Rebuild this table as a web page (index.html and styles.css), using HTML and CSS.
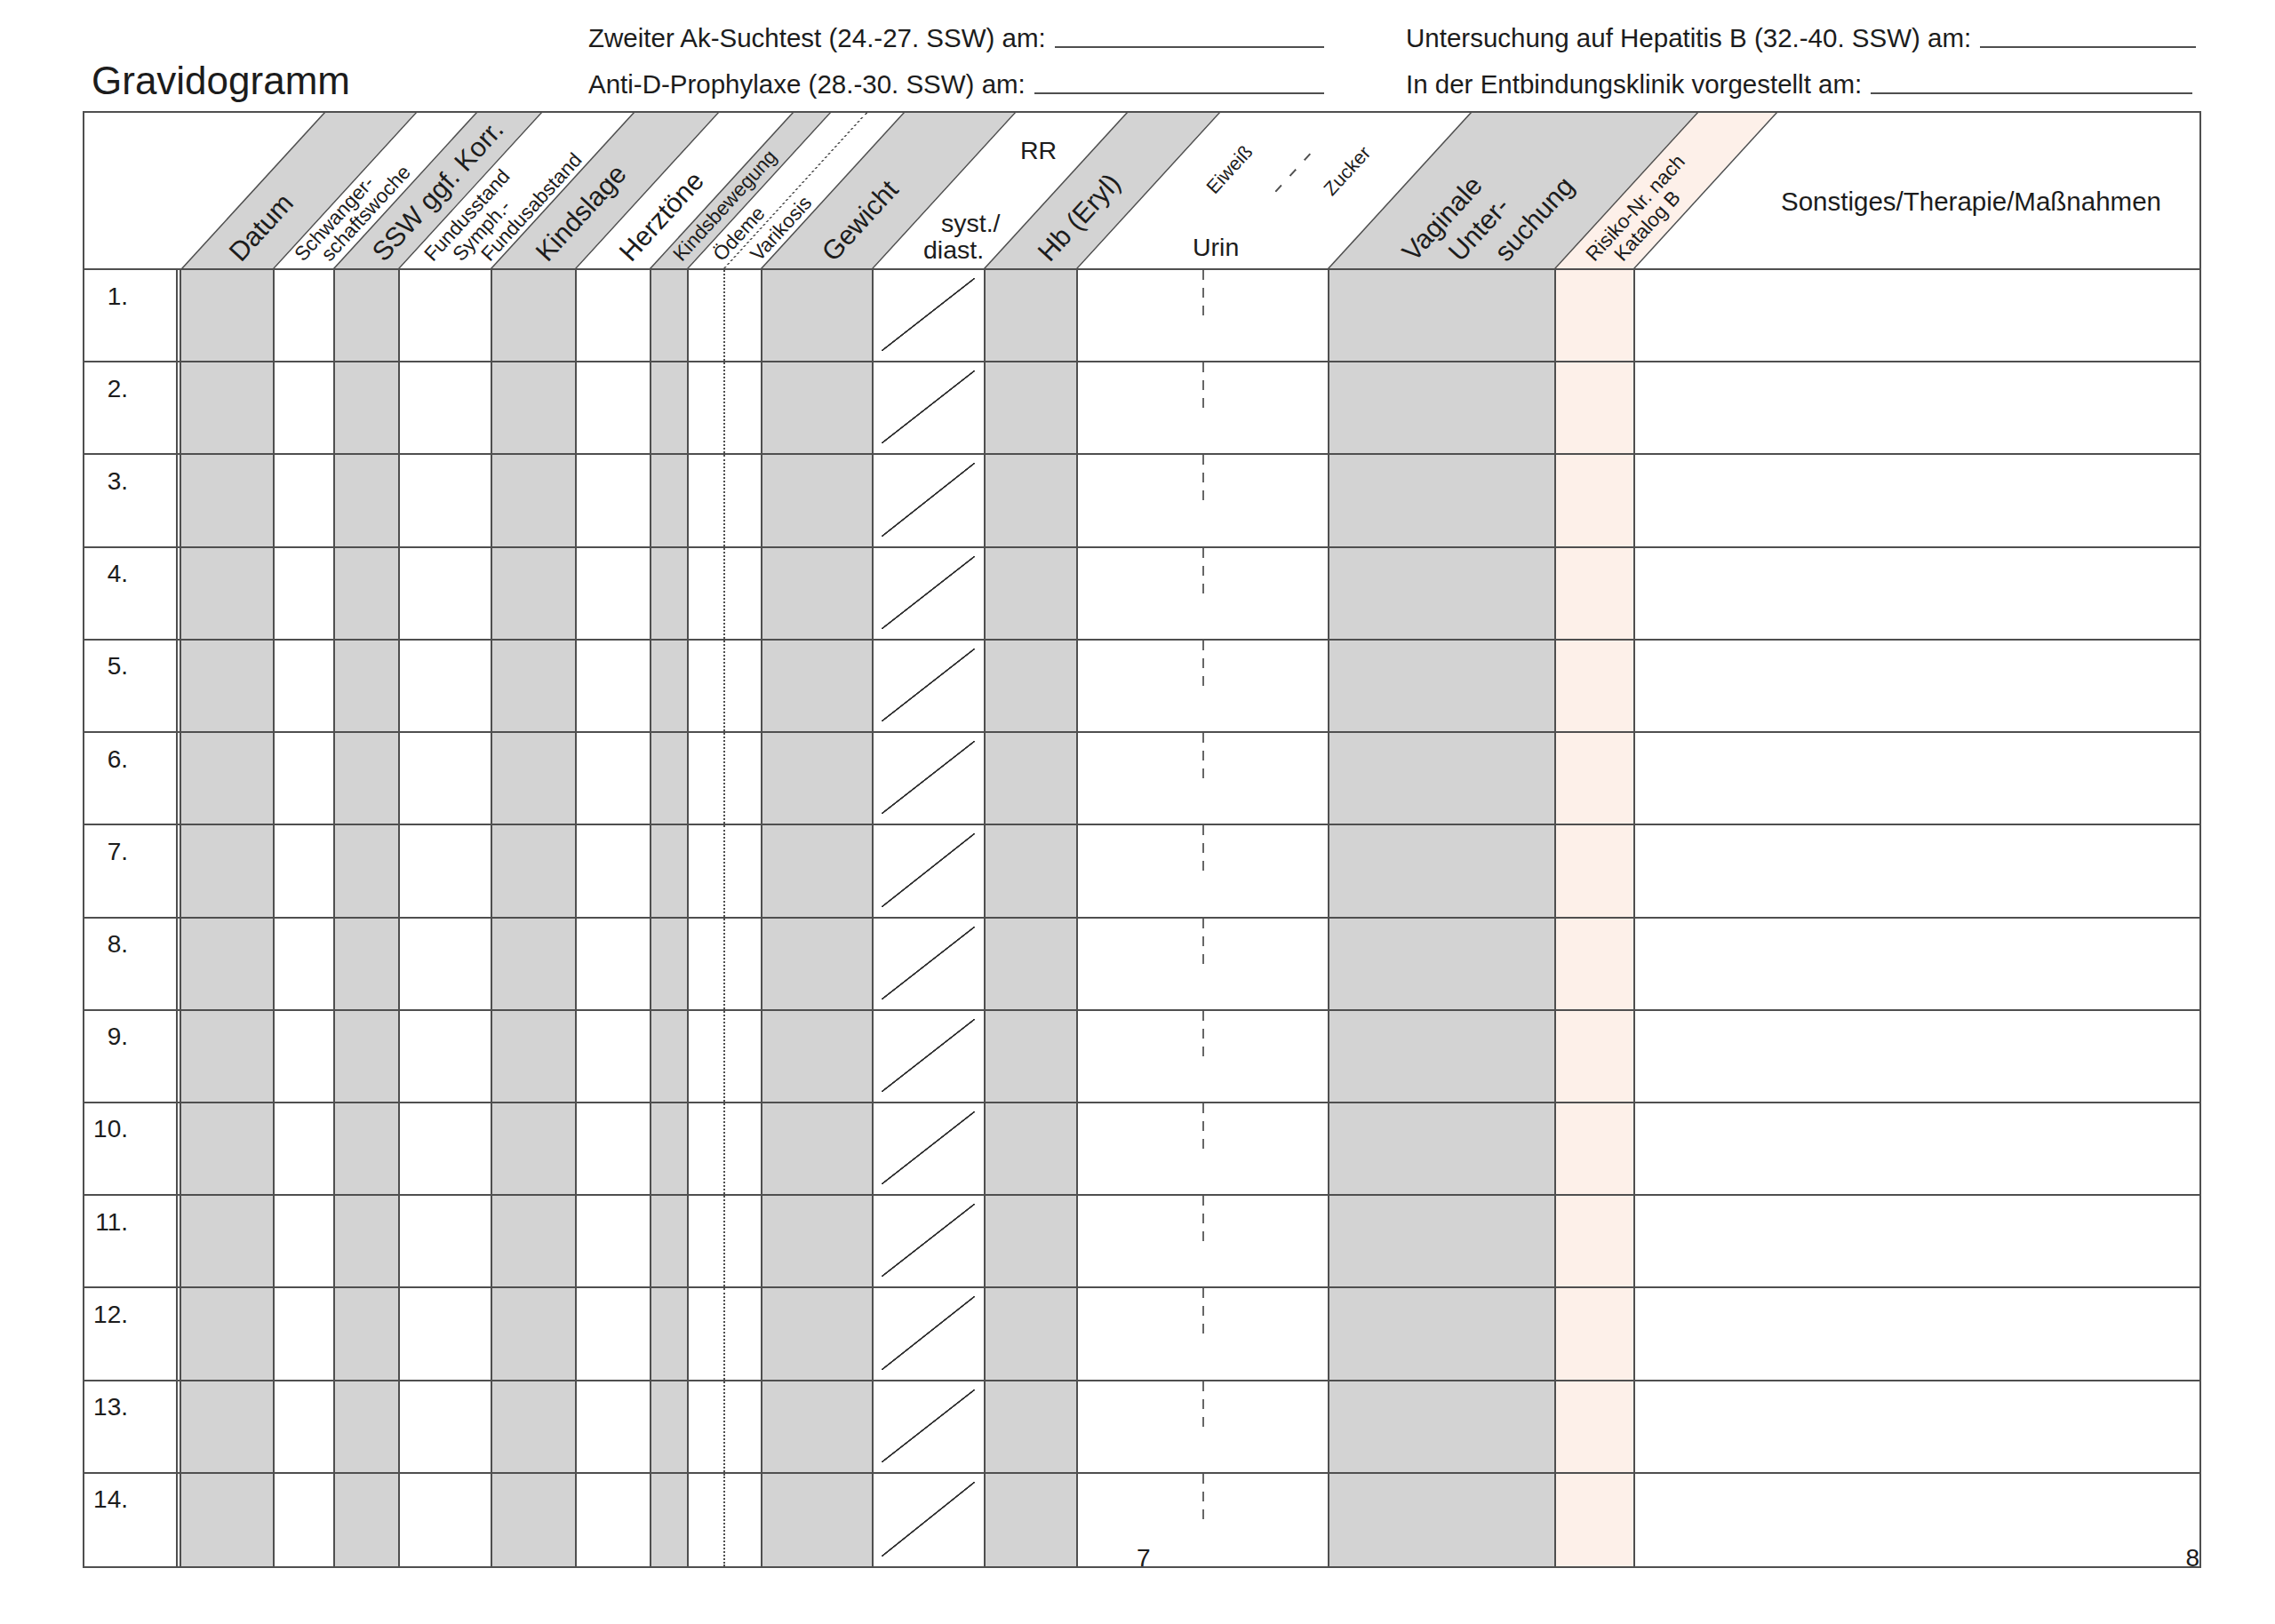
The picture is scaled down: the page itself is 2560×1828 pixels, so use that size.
FILE: index.html
```html
<!DOCTYPE html>
<html lang="de">
<head>
<meta charset="utf-8">
<title>Gravidogramm</title>
<link rel="stylesheet" href="styles.css">
</head>
<body>
<div class="page">
  <header class="top">
    <h1 class="title">Gravidogramm</h1>
    <div class="fields fields-mid">
      <div class="field"><span class="flabel">Zweiter Ak-Suchtest (24.-27. SSW) am:</span><span class="fline"></span></div>
      <div class="field"><span class="flabel">Anti-D-Prophylaxe (28.-30. SSW) am:</span><span class="fline"></span></div>
    </div>
    <div class="fields fields-right">
      <div class="field"><span class="flabel">Untersuchung auf Hepatitis B (32.-40. SSW) am:</span><span class="fline"></span></div>
      <div class="field field-short"><span class="flabel">In der Entbindungsklinik vorgestellt am:</span><span class="fline"></span></div>
    </div>
  </header>

  <div class="table">
    <div class="thead">
      <div class="th th-num"></div>
      <div class="th gray"><span class="lbl big l-datum">Datum</span></div>
      <div class="th"><span class="lbl small l-schw1">Schwanger-</span><span class="lbl small l-schw2">schaftswoche</span></div>
      <div class="th gray"><span class="lbl big l-ssw">SSW ggf. Korr.</span></div>
      <div class="th"><span class="lbl small l-fu1">Fundusstand</span><span class="lbl small l-fu2">Symph.-</span><span class="lbl small l-fu3">Fundusabstand</span></div>
      <div class="th gray"><span class="lbl big l-kl">Kindslage</span></div>
      <div class="th"><span class="lbl big l-ht">Herztöne</span></div>
      <div class="th gray"><span class="lbl small l-kb">Kindsbewegung</span></div>
      <div class="th"><span class="lbl small l-od">Ödeme</span></div>
      <div class="th th-dotted"><span class="lbl small l-va">Varikosis</span></div>
      <div class="th gray"><span class="lbl big l-ge">Gewicht</span></div>
      <div class="th">
        <span class="rr-top">RR</span>
        <span class="rr-sub"><span class="rr-l1">syst./</span><span class="rr-l2">diast.</span></span>
      </div>
      <div class="th gray"><span class="lbl big l-hb">Hb (Eryl)</span></div>
      <div class="th">
        <span class="lbl tiny l-ei">Eiweiß</span>
        <span class="urin-dash"></span>
        <span class="lbl tiny l-zu">Zucker</span>
        <span class="urin">Urin</span>
      </div>
      <div class="th gray"><span class="lbl big l-va1">Vaginale</span><span class="lbl big l-va2">Unter-</span><span class="lbl big l-va3">suchung</span></div>
      <div class="th peach"><span class="lbl small l-ri1">Risiko-Nr. nach</span><span class="lbl small l-ri2">Katalog B</span></div>
      <div class="th"><span class="sonst">Sonstiges/Therapie/Maßnahmen</span></div>
    </div>

    <div class="tbody">
      <div class="tr"><div class="td td-num"><span class="num">1.</span></div><div class="td td-first gray"></div><div class="td"></div><div class="td gray"></div><div class="td"></div><div class="td gray"></div><div class="td"></div><div class="td gray"></div><div class="td"></div><div class="td td-dotted"></div><div class="td gray"></div><div class="td td-rr"></div><div class="td gray"></div><div class="td td-urin"></div><div class="td gray"></div><div class="td peach"></div><div class="td"></div></div>
      <div class="tr"><div class="td td-num"><span class="num">2.</span></div><div class="td td-first gray"></div><div class="td"></div><div class="td gray"></div><div class="td"></div><div class="td gray"></div><div class="td"></div><div class="td gray"></div><div class="td"></div><div class="td td-dotted"></div><div class="td gray"></div><div class="td td-rr"></div><div class="td gray"></div><div class="td td-urin"></div><div class="td gray"></div><div class="td peach"></div><div class="td"></div></div>
      <div class="tr"><div class="td td-num"><span class="num">3.</span></div><div class="td td-first gray"></div><div class="td"></div><div class="td gray"></div><div class="td"></div><div class="td gray"></div><div class="td"></div><div class="td gray"></div><div class="td"></div><div class="td td-dotted"></div><div class="td gray"></div><div class="td td-rr"></div><div class="td gray"></div><div class="td td-urin"></div><div class="td gray"></div><div class="td peach"></div><div class="td"></div></div>
      <div class="tr"><div class="td td-num"><span class="num">4.</span></div><div class="td td-first gray"></div><div class="td"></div><div class="td gray"></div><div class="td"></div><div class="td gray"></div><div class="td"></div><div class="td gray"></div><div class="td"></div><div class="td td-dotted"></div><div class="td gray"></div><div class="td td-rr"></div><div class="td gray"></div><div class="td td-urin"></div><div class="td gray"></div><div class="td peach"></div><div class="td"></div></div>
      <div class="tr"><div class="td td-num"><span class="num">5.</span></div><div class="td td-first gray"></div><div class="td"></div><div class="td gray"></div><div class="td"></div><div class="td gray"></div><div class="td"></div><div class="td gray"></div><div class="td"></div><div class="td td-dotted"></div><div class="td gray"></div><div class="td td-rr"></div><div class="td gray"></div><div class="td td-urin"></div><div class="td gray"></div><div class="td peach"></div><div class="td"></div></div>
      <div class="tr"><div class="td td-num"><span class="num">6.</span></div><div class="td td-first gray"></div><div class="td"></div><div class="td gray"></div><div class="td"></div><div class="td gray"></div><div class="td"></div><div class="td gray"></div><div class="td"></div><div class="td td-dotted"></div><div class="td gray"></div><div class="td td-rr"></div><div class="td gray"></div><div class="td td-urin"></div><div class="td gray"></div><div class="td peach"></div><div class="td"></div></div>
      <div class="tr"><div class="td td-num"><span class="num">7.</span></div><div class="td td-first gray"></div><div class="td"></div><div class="td gray"></div><div class="td"></div><div class="td gray"></div><div class="td"></div><div class="td gray"></div><div class="td"></div><div class="td td-dotted"></div><div class="td gray"></div><div class="td td-rr"></div><div class="td gray"></div><div class="td td-urin"></div><div class="td gray"></div><div class="td peach"></div><div class="td"></div></div>
      <div class="tr"><div class="td td-num"><span class="num">8.</span></div><div class="td td-first gray"></div><div class="td"></div><div class="td gray"></div><div class="td"></div><div class="td gray"></div><div class="td"></div><div class="td gray"></div><div class="td"></div><div class="td td-dotted"></div><div class="td gray"></div><div class="td td-rr"></div><div class="td gray"></div><div class="td td-urin"></div><div class="td gray"></div><div class="td peach"></div><div class="td"></div></div>
      <div class="tr"><div class="td td-num"><span class="num">9.</span></div><div class="td td-first gray"></div><div class="td"></div><div class="td gray"></div><div class="td"></div><div class="td gray"></div><div class="td"></div><div class="td gray"></div><div class="td"></div><div class="td td-dotted"></div><div class="td gray"></div><div class="td td-rr"></div><div class="td gray"></div><div class="td td-urin"></div><div class="td gray"></div><div class="td peach"></div><div class="td"></div></div>
      <div class="tr"><div class="td td-num"><span class="num">10.</span></div><div class="td td-first gray"></div><div class="td"></div><div class="td gray"></div><div class="td"></div><div class="td gray"></div><div class="td"></div><div class="td gray"></div><div class="td"></div><div class="td td-dotted"></div><div class="td gray"></div><div class="td td-rr"></div><div class="td gray"></div><div class="td td-urin"></div><div class="td gray"></div><div class="td peach"></div><div class="td"></div></div>
      <div class="tr"><div class="td td-num"><span class="num">11.</span></div><div class="td td-first gray"></div><div class="td"></div><div class="td gray"></div><div class="td"></div><div class="td gray"></div><div class="td"></div><div class="td gray"></div><div class="td"></div><div class="td td-dotted"></div><div class="td gray"></div><div class="td td-rr"></div><div class="td gray"></div><div class="td td-urin"></div><div class="td gray"></div><div class="td peach"></div><div class="td"></div></div>
      <div class="tr"><div class="td td-num"><span class="num">12.</span></div><div class="td td-first gray"></div><div class="td"></div><div class="td gray"></div><div class="td"></div><div class="td gray"></div><div class="td"></div><div class="td gray"></div><div class="td"></div><div class="td td-dotted"></div><div class="td gray"></div><div class="td td-rr"></div><div class="td gray"></div><div class="td td-urin"></div><div class="td gray"></div><div class="td peach"></div><div class="td"></div></div>
      <div class="tr"><div class="td td-num"><span class="num">13.</span></div><div class="td td-first gray"></div><div class="td"></div><div class="td gray"></div><div class="td"></div><div class="td gray"></div><div class="td"></div><div class="td gray"></div><div class="td"></div><div class="td td-dotted"></div><div class="td gray"></div><div class="td td-rr"></div><div class="td gray"></div><div class="td td-urin"></div><div class="td gray"></div><div class="td peach"></div><div class="td"></div></div>
      <div class="tr"><div class="td td-num"><span class="num">14.</span></div><div class="td td-first gray"></div><div class="td"></div><div class="td gray"></div><div class="td"></div><div class="td gray"></div><div class="td"></div><div class="td gray"></div><div class="td"></div><div class="td td-dotted"></div><div class="td gray"></div><div class="td td-rr"></div><div class="td gray"></div><div class="td td-urin"></div><div class="td gray"></div><div class="td peach"></div><div class="td"></div></div>
    </div>

    <span class="pageno pageno-left">7</span>
    <span class="pageno pageno-right">8</span>
  </div>
</div>
</body>
</html>
```

FILE: styles.css
```css
* { box-sizing: border-box; }

:root {
  --line: #4f4f4f;
  --gray: #d3d3d3;
  --peach: #fdf0e9;
  --ink: #1c1c1c;
  --cols: 109px 103px 68px 73px 104px 95px 84px 42px 41px 42px 125px 126px 104px 283px 255px 89px 1fr;
}

html, body {
  margin: 0;
  padding: 0;
  background: #fff;
}

body {
  font-family: "Liberation Sans", Arial, Helvetica, sans-serif;
  color: var(--ink);
}

.page {
  width: 2560px;
  height: 1828px;
  padding: 28px 0 0 93px;
}

/* ---------- top area ---------- */
.top {
  display: flex;
  align-items: flex-start;
  height: 97px;
}

.title {
  margin: 41px 0 0 0;
  width: 569px;
  padding-left: 10px;
  font-size: 44px;
  line-height: 1;
  font-weight: normal;
}

.fields {
  display: flex;
  flex-direction: column;
  gap: 22.5px;
}

.fields-mid { width: 828px; }
.fields-right { width: 889px; margin-left: 92px; }

.field {
  display: flex;
  align-items: flex-end;
  height: 29.5px;
  font-size: 29.5px;
  line-height: 1;
}

.field-short { margin-right: 4px; }

.flabel { white-space: nowrap; }

.fline {
  flex: 1;
  margin-left: 10px;
  margin-bottom: 3.5px;
  border-bottom: 2px solid var(--line);
}

/* ---------- table ---------- */
.table {
  position: relative;
  width: 2384px;
  border: 2px solid var(--line);
}

.thead {
  display: grid;
  grid-template-columns: var(--cols);
  height: 177px;
  border-bottom: 2px solid var(--line);
  position: relative;
  overflow: hidden;
  isolation: isolate;
}

.th { position: relative; }

.th::before {
  content: "";
  position: absolute;
  inset: 0;
  z-index: 0;
  background: #fff;
  border-left: 2px solid var(--line);
  transform-origin: 0 100%;
  transform: skewX(-42.45deg);
}

.th.gray::before { background: var(--gray); }
.th.peach::before { background: var(--peach); }
.th-num::before { display: none; }
.th-dotted::before { border-left-style: dotted; }

.lbl {
  position: absolute;
  left: var(--x);
  bottom: calc(var(--b, 6px) - 0.1535em);
  z-index: 1;
  white-space: nowrap;
  line-height: 1;
  transform-origin: 0 0.8465em;
  transform: rotate(-47.55deg);
}

.big { font-size: 30.5px; }
.small { font-size: 22.5px; }
.tiny { font-size: 21.5px; }

.l-datum { --x: 67px; }
.l-schw1 { --x: 35px; }
.l-schw2 { --x: 65px; }
.l-ssw { --x: 57px; }
.l-fu1 { --x: 40px; }
.l-fu2 { --x: 72px; }
.l-fu3 { --x: 104px; }
.l-kl { --x: 64px; }
.l-ht { --x: 63px; }
.l-kb { --x: 37px; }
.l-od { --x: 40px; }
.l-va { --x: 41px; }
.l-ge { --x: 82px; }
.l-hb { --x: 74px; }
.l-va1 { --x: 97px; }
.l-va2 { --x: 149px; }
.l-va3 { --x: 201px; }
.l-ri1 { --x: 46px; }
.l-ri2 { --x: 78px; }
.l-ei { --x: 157px; --b: 82px; }
.l-zu { --x: 289px; --b: 80px; }

.urin-dash {
  position: absolute;
  left: 224px;
  bottom: 86px;
  z-index: 1;
  width: 58px;
  height: 1.5px;
  background: repeating-linear-gradient(to right, var(--line) 0 10px, transparent 10px 24px);
  transform-origin: 0 50%;
  transform: rotate(-47.55deg);
}

.urin {
  position: absolute;
  left: 131px;
  bottom: 10px;
  z-index: 1;
  font-size: 28.5px;
  line-height: 1;
}

.rr-top {
  position: absolute;
  left: 167px;
  top: 28px;
  z-index: 1;
  font-size: 28.5px;
  line-height: 1;
}

.rr-sub {
  position: absolute;
  left: 58px;
  bottom: 6px;
  z-index: 1;
  font-size: 28.5px;
  line-height: 30px;
  white-space: nowrap;
}

.rr-l1, .rr-l2 { display: block; }
.rr-l1 { padding-left: 20px; }

.sonst {
  position: absolute;
  left: 166px;
  bottom: 61px;
  z-index: 1;
  font-size: 29.5px;
  line-height: 1;
  white-space: nowrap;
}

/* ---------- body ---------- */
.tbody {
  display: grid;
  grid-template-rows: repeat(14, 1fr);
  height: 1459px;
}

.tr {
  display: grid;
  grid-template-columns: var(--cols);
  border-bottom: 2px solid var(--line);
}

.tr:last-child { border-bottom: none; }

.td {
  position: relative;
  border-left: 2px solid var(--line);
}

.td.gray { background: var(--gray); }
.td.peach { background: var(--peach); }

.td-num {
  border-left: none;
  border-right: 6px double var(--line);
}

.td-first { border-left: none; }
.td-dotted { border-left-style: dotted; }

.num {
  display: block;
  width: 49px;
  padding-top: 15.5px;
  text-align: right;
  font-size: 28px;
  line-height: 1;
}

.td-rr::after {
  content: "";
  position: absolute;
  top: 9px;
  right: 10px;
  bottom: 11px;
  left: 9px;
  background: linear-gradient(to bottom right,
    transparent calc(50% - 1.1px),
    #2e2e2e calc(50% - 0.6px),
    #2e2e2e calc(50% + 0.6px),
    transparent calc(50% + 1.1px));
}

.td-urin::after {
  content: "";
  position: absolute;
  left: 140px;
  top: 0;
  width: 1.5px;
  height: 53px;
  background: repeating-linear-gradient(to bottom, #666 0 11px, transparent 11px 20px);
}

.pageno {
  position: absolute;
  bottom: -5px;
  font-size: 28px;
  line-height: 1;
  z-index: 2;
}

.pageno-left { left: 1184px; }
.pageno-right { right: 0; }
```
